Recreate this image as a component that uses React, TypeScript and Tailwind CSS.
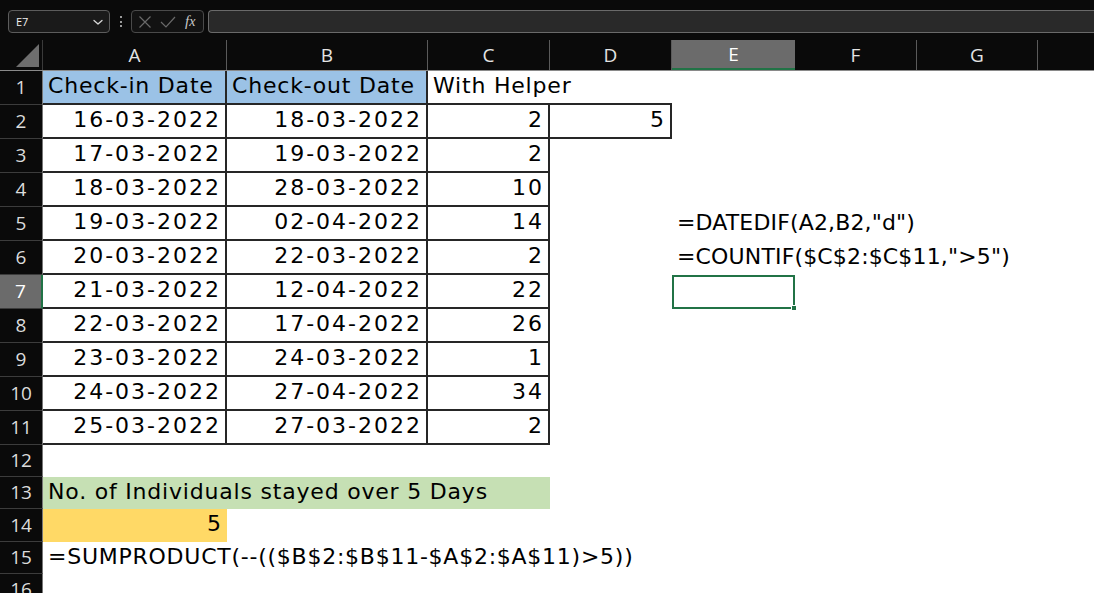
import React from "react";

type Cell = {
  t?: string;
  right?: boolean;
  bg?: string;
  b?: string;
  tr?: string;
  z?: boolean;
};

const colW = ["w-[184px]", "w-[201px]", "w-[122px]", "w-[122px]", "w-[123px]", "w-[122px]", "w-[121px]", "w-[120px]"];
const colL = ["A", "B", "C", "D", "E", "F", "G", ""];
const rowH = [
  "h-[34px]", "h-[34px]", "h-[34px]", "h-[34px]", "h-[34px]", "h-[34px]", "h-[34px]", "h-[34px]",
  "h-[34px]", "h-[34px]", "h-[34px]", "h-[32px]", "h-[32px]", "h-[33px]", "h-[32px]", "h-[32px]",
];

const BR = "border-r-2 border-b-2 border-[#262626]";
const BB = "border-b-2 border-[#262626]";
const NUM = "tracking-[2px]";
const TXT = "tracking-[0.8px]";
const FML = "tracking-[0.15px]";

const checkIn = ["16-03-2022", "17-03-2022", "18-03-2022", "19-03-2022", "20-03-2022", "21-03-2022", "22-03-2022", "23-03-2022", "24-03-2022", "25-03-2022"];
const checkOut = ["18-03-2022", "19-03-2022", "28-03-2022", "02-04-2022", "22-03-2022", "12-04-2022", "17-04-2022", "24-03-2022", "27-04-2022", "27-03-2022"];
const helper = ["2", "2", "10", "14", "2", "22", "26", "1", "34", "2"];

function buildCells(): Record<string, Cell> {
  const c: Record<string, Cell> = {};
  c["1,0"] = { t: "Check-in Date", bg: "bg-[#9bc2e6]", b: BR, tr: TXT };
  c["1,1"] = { t: "Check-out Date", bg: "bg-[#9bc2e6]", b: BR, tr: TXT };
  c["1,2"] = { t: "With Helper", b: BB, tr: TXT, z: true };
  c["1,3"] = { b: BB };
  for (let i = 0; i < 10; i++) {
    const r = i + 2;
    c[`${r},0`] = { t: checkIn[i], right: true, b: BR, tr: NUM };
    c[`${r},1`] = { t: checkOut[i], right: true, b: BR, tr: NUM };
    c[`${r},2`] = { t: helper[i], right: true, b: BR, tr: NUM };
  }
  c["2,3"] = { t: "5", right: true, b: BR, tr: NUM };
  c["5,4"] = { t: '=DATEDIF(A2,B2,"d")', tr: FML, z: true };
  c["6,4"] = { t: '=COUNTIF($C$2:$C$11,">5")', tr: FML, z: true };
  c["13,0"] = { t: "No. of Individuals stayed over 5 Days", bg: "bg-[#c6e0b4]", tr: TXT, z: true };
  c["13,1"] = { bg: "bg-[#c6e0b4]" };
  c["13,2"] = { bg: "bg-[#c6e0b4]" };
  c["14,0"] = { t: "5", right: true, bg: "bg-[#ffd966]", tr: NUM };
  c["15,0"] = { t: "=SUMPRODUCT(--(($B$2:$B$11-$A$2:$A$11)>5))", tr: "tracking-[0.75px]", z: true };
  return c;
}

const cells = buildCells();

function TopBar() {
  return (
    <div className="h-[40px] shrink-0 bg-[#0a0a0a] flex items-start pt-[10px] pl-[8px]">
      <div className="w-[102px] h-[23px] rounded-[4px] border border-[#5c5c5c] bg-[#1a1a1a] flex items-center justify-between pl-[7px] pr-[5px]">
        <span className="text-[11px] text-[#f0f0f0] font-['Open_Sans',sans-serif] leading-none">E7</span>
        <svg width="12" height="12" viewBox="0 0 12 12" fill="none">
          <path d="M2 4.5 L6 8 L10 4.5" stroke="#d8d8d8" strokeWidth="1.3" strokeLinecap="round" strokeLinejoin="round" />
        </svg>
      </div>
      <div className="w-[21px] h-[23px] flex flex-col items-center justify-center gap-[2.5px]">
        <span className="w-[2px] h-[2px] bg-[#9a9a9a]" />
        <span className="w-[2px] h-[2px] bg-[#9a9a9a]" />
        <span className="w-[2px] h-[2px] bg-[#9a9a9a]" />
      </div>
      <div className="w-[73px] h-[23px] rounded-[4px] border border-[#4a4a4a] bg-[#121212] flex items-center pl-[5px]">
        <svg width="14" height="14" viewBox="0 0 14 14" className="ml-[1px]">
          <path d="M1.5 1.5 L12.5 12.5 M12.5 1.5 L1.5 12.5" stroke="#6a6a6a" strokeWidth="1.2" />
        </svg>
        <svg width="16" height="14" viewBox="0 0 16 14" className="ml-[8px]">
          <path d="M1 7 L6 12 L15 2" stroke="#6a6a6a" strokeWidth="1.2" fill="none" />
        </svg>
        <span className="ml-[9px] text-[15px] italic text-[#c8c8c8] font-['Liberation_Serif',serif] leading-none">
          f<span className="text-[14px]">x</span>
        </span>
      </div>
      <div className="ml-[4px] flex-1 h-[23px] rounded-l-[4px] border border-r-0 border-[#6a6a6a] bg-[#292929]" />
    </div>
  );
}

function ColumnHeader() {
  return (
    <div className="h-[31px] shrink-0 flex bg-[#0a0a0a] border-b border-[#8a8a8a]">
      <div className="w-[43px] shrink-0 relative border-r border-[#3a3a3a]">
        <div className="absolute right-[3px] bottom-[3px] w-0 h-0 border-l-[23px] border-l-transparent border-b-[23px] border-b-[#6e6e6e]" />
      </div>
      {colL.map((l, i) => (
        <div
          key={i}
          className={`${colW[i]} shrink-0 flex items-center justify-center text-[19px] font-['Open_Sans',sans-serif] leading-none ${
            l === "E"
              ? "bg-[#6b6b6b] text-white border-b-2 border-[#217346]"
              : "text-[#e4e4e4] border-r border-[#5a5a5a]"
          }`}
        >
          {l}
        </div>
      ))}
    </div>
  );
}

function Row({ r }: { r: number }) {
  const sel = r === 7;
  return (
    <div className={`${rowH[r - 1]} flex shrink-0`}>
      <div
        className={`w-[43px] shrink-0 flex items-center justify-center text-[19px] font-['Open_Sans',sans-serif] leading-none border-b border-[#3c3c3c] ${
          sel ? "bg-[#6b6b6b] text-white border-r-2 border-r-[#217346]" : "bg-[#0a0a0a] text-[#dcdcdc] border-r border-r-[#777777]"
        }`}
      >
        {r}
      </div>
      {colL.map((_, ci) => {
        const c = cells[`${r},${ci}`];
        const isSel = r === 7 && ci === 4;
        return (
          <div
            key={ci}
            className={`${colW[ci]} shrink-0 relative flex items-center text-[22px] text-black font-['DejaVu_Sans',sans-serif] leading-none whitespace-nowrap ${
              c?.bg ?? ""
            } ${c?.b ?? ""} ${c?.right ? "justify-end pr-[4px]" : "pl-[5px]"} ${c?.z ? "z-10" : ""}`}
          >
            {c?.t && <span className={`${c.tr ?? ""} pb-[3px]`}>{c.t}</span>}
            {isSel && (
              <div className="absolute inset-0 border-2 border-[#217346]">
                <div className="absolute right-[-4px] bottom-[-4px] w-[6px] h-[6px] bg-[#217346] border border-white" />
              </div>
            )}
          </div>
        );
      })}
    </div>
  );
}

export default function App() {
  const rows = Array.from({ length: 16 }, (_, i) => i + 1);
  return (
    <div className="w-[1094px] h-[593px] overflow-hidden bg-white flex flex-col">
      <TopBar />
      <ColumnHeader />
      <div className="flex flex-col shrink-0">
        {rows.map((r) => (
          <Row key={r} r={r} />
        ))}
      </div>
    </div>
  );
}
